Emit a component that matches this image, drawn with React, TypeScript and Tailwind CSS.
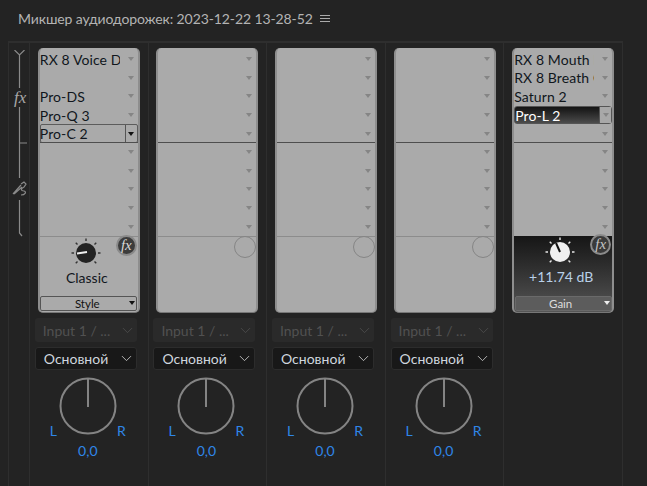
import { ChevronDown } from "lucide-react";

const font = { fontFamily: 'Lato, "Noto Sans", "Liberation Sans", sans-serif' };

const Arrow = ({ className = "border-t-[#858585]" }: { className?: string }) => (
  <span className={`block w-0 h-0 border-x-[3.5px] border-x-transparent border-t-[4px] ${className}`} />
);

const Slot = ({ label, kind }: { label?: string; kind?: "selected" | "active" }) => {
  if (kind === "selected") {
    return (
      <div className="h-[18.6px] flex items-center border border-[#5c5c5c] rounded-[2px] bg-[#aaaaaa]">
        <span className="flex-1 -ml-px text-[14px] tracking-[0.1px] text-[#10161c] whitespace-nowrap overflow-hidden">{label}</span>
        <span className="w-[12px] h-full border-l border-[#555] flex items-center justify-center">
          <Arrow className="border-t-[#111]" />
        </span>
      </div>
    );
  }
  if (kind === "active") {
    return (
      <div className="h-[18.6px] flex items-center border border-[#555] rounded-[3px] bg-gradient-to-b from-[#141414] to-[#4c4c4c]">
        <span className="flex-1 text-[14px] tracking-[0.1px] text-white whitespace-nowrap overflow-hidden">{label}</span>
        <span className="w-[12px] h-full bg-[#a8a8a8] border-l border-[#555] flex items-center justify-center">
          <Arrow />
        </span>
      </div>
    );
  }
  return (
    <div className="h-[18.6px] flex items-center">
      <span className="w-[80px] text-[14px] tracking-[0.1px] text-[#10161c] whitespace-nowrap overflow-hidden">{label}</span>
      <span className="ml-auto mr-[4px]">
        <Arrow />
      </span>
    </div>
  );
};

const Slots = ({ items }: { items: { label?: string; kind?: "selected" | "active" }[] }) => (
  <div className="pt-[2px]">
    {items.slice(0, 5).map((s, i) => (
      <Slot key={i} {...s} />
    ))}
    <div className="h-px bg-[#4e4e4e] -mt-px" />
    {items.slice(5).map((s, i) => (
      <Slot key={i} {...s} />
    ))}
  </div>
);

const FxBadge = ({ light }: { light?: boolean }) => (
  <div
    className={`absolute right-[1px] top-[-2px] w-[21px] h-[21px] rounded-full border-2 border-[#8a8a8a] flex items-center justify-center italic text-[15px] leading-none ${
      light ? "bg-[#3a3a3a] text-[#c4c4c4]" : "bg-[#3c3c3c] text-[#d8d8d8]"
    }`}
    style={{ fontFamily: '"Liberation Serif", serif' }}
  >
    fx
  </div>
);

const Knob = ({ light }: { light?: boolean }) => (
  <svg width="30" height="30" viewBox="0 0 30 30" className="block">
    {[-135, -90, -45, 0, 45, 90, 135].map((a) => (
      <line
        key={a}
        x1="15"
        y1="3"
        x2="15"
        y2="0.5"
        stroke={light ? "#e8e8e8" : "#333"}
        strokeWidth="1.4"
        transform={`rotate(${a} 15 15)`}
      />
    ))}
    <circle cx="15" cy="15" r="10" fill={light ? "#efefef" : "#222"} />
    {light ? (
      <line x1="15" y1="15" x2="11" y2="6" stroke="#111" strokeWidth="2" />
    ) : (
      <line x1="16" y1="14" x2="6" y2="15.5" stroke="#eee" strokeWidth="2" />
    )}
  </svg>
);

const Rack = ({ items, children }: { items: { label?: string; kind?: "selected" | "active" }[]; children?: React.ReactNode }) => (
  <div className="w-[102px] h-[265px] rounded-[5px] bg-[#aaaaaa] border-x-2 border-b border-x-[#8e8e8e] border-b-[#777] flex flex-col overflow-hidden">
    <Slots items={items} />
    {children}
  </div>
);

const Select = ({ label, disabled }: { label: string; disabled?: boolean }) => (
  <div
    className={`w-[102px] rounded-[3px] flex items-center pl-[8px] pr-[1px] text-[14px] ${
      disabled ? "h-[24px] bg-[#2a2a2a] text-[#515151]" : "h-[23px] bg-[#181818] border border-[#2c2c2c] text-[#cfd6de]"
    }`}
  >
    <span className="flex-1 whitespace-nowrap">{label}</span>
    <ChevronDown size={17} strokeWidth={1.2} className={disabled ? "text-[#4e4e4e]" : "text-[#cccccc]"} />
  </div>
);

const Pan = () => (
  <div className="relative w-[102px] h-[82px] text-[#2f86e8] text-[14px]">
    <svg width="58" height="58" viewBox="0 0 58 58" className="mx-auto block">
      <circle cx="29" cy="29" r="27.5" fill="none" stroke="#848484" strokeWidth="2" />
      <line x1="29" y1="2" x2="29" y2="30" stroke="#848484" strokeWidth="2" />
    </svg>
    <div className="flex justify-between px-[13px] -mt-[13px] leading-[18px]">
      <span>L</span>
      <span>R</span>
    </div>
    <div className="text-center leading-[18px] mt-[2px]">0,0</div>
  </div>
);

const blankBottom = (
  <div className="relative flex-1 border-t border-[#8c8c8c]">
    <div className="absolute right-0 top-[-1px] w-[22px] h-[22px] rounded-full border-[1.5px] border-[#858585]" />
  </div>
);

const blankItems = Array.from({ length: 10 }, () => ({}));

const first = [
  { label: "RX 8 Voice D" },
  {},
  { label: "Pro-DS" },
  { label: "Pro-Q 3" },
  { label: "Pro-C 2", kind: "selected" as const },
  {},
  {},
  {},
  {},
  {},
];

const last = [
  { label: "RX 8 Mouth D" },
  { label: "RX 8 Breath C" },
  { label: "Saturn 2" },
  { label: "Pro-L 2", kind: "active" as const },
  {},
  {},
  {},
  {},
  {},
  {},
];

const Channel = ({ children }: { children: React.ReactNode }) => (
  <div className="w-[119px] border-r border-[#2e2e2e] pt-[5px] flex flex-col items-center">{children}</div>
);

const Bottom = () => (
  <div className="flex flex-col items-center mt-[5px] mr-[6px]">
    <Select label="Input 1 / ..." disabled />
    <div className="mt-[5px]">
      <Select label="Основной" />
    </div>
    <div className="mt-[7px] ml-[4px]">
      <Pan />
    </div>
  </div>
);

export default function App() {
  return (
    <div className="w-[647px] h-[486px] bg-[#232323] overflow-hidden" style={font}>
      <div className="h-[41px] flex items-center pl-[18px] pb-[5px] text-[14px] tracking-[-0.1px] text-[#b4b4b4] gap-[7px] whitespace-nowrap">
        <span>Микшер аудиодорожек: 2023-12-22 13-28-52</span>
        <span className="w-[10px] flex flex-col gap-[2px]">
          <span className="h-px bg-[#aaa]" />
          <span className="h-px bg-[#aaa]" />
          <span className="h-px bg-[#aaa]" />
        </span>
      </div>
      <div className="ml-[8px] w-[615px] h-[445px] border-t-2 border-x border-[#2e2e2e] flex">
        <div className="relative w-[21px] border-r border-[#2e2e2e]">
          <svg width="20" height="200" viewBox="0 0 20 200" className="block mt-[7px]" fill="none" stroke="#8a8a8a" strokeWidth="1.2">
            <path d="M5.5 0 L10.5 5 L15.5 0 M10.5 5 V38" />
            <path d="M10.5 57 V93 L18 93 M10.5 93 V128" />
            <path d="M10.5 150 V183 L13 186" />
            <path d="M4 144 L12 135 M5 144 L13 137 M12 134 L15 132 L17 134 L15 137 C11 139 12 141 15 141 C18 142 16 145 12 145" />
          </svg>
          <span
            className="absolute left-[5px] top-[42px] italic text-[17px] text-[#a8a8a8]"
            style={{ fontFamily: '"Liberation Serif", serif' }}
          >
            fx
          </span>
        </div>
        <Channel>
          <Rack items={first}>
            <div className="relative flex-1 border-t border-[#8c8c8c] flex flex-col items-center">
              <FxBadge />
              <div className="mt-[1px] mr-[5px]">
                <Knob />
              </div>
              <div className="mr-[4px] text-[14px] leading-[20px] text-[#10161c]">Classic</div>
              <div className="mt-auto mb-px relative w-[97px] h-[15px] pr-[3px] border border-[#555] rounded-[2px] bg-[#aaaaaa] text-[11.5px] leading-[14px] text-center text-[#111]">
                Style
                <span className="absolute right-[1px] top-[4px]">
                  <Arrow className="border-t-[#111]" />
                </span>
              </div>
            </div>
          </Rack>
          <Bottom />
        </Channel>
        {[0, 1, 2].map((i) => (
          <Channel key={i}>
            <Rack items={blankItems}>{blankBottom}</Rack>
            <Bottom />
          </Channel>
        ))}
        <div className="w-[118px] pt-[5px] flex flex-col items-center">
          <Rack items={last}>
            <div className="relative flex-1 bg-gradient-to-b from-[#161616] to-[#565656] flex flex-col items-center">
              <FxBadge light />
              <div className="mt-[1px] mr-[6px]">
                <Knob light />
              </div>
              <div className="mr-[4px] text-[14px] leading-[20px] text-[#b8d0e8]">+11.74 dB</div>
              <div className="mt-auto mb-px relative w-[97px] h-[15px] pr-[5px] rounded-[2px] border border-[#6a6a6a] bg-[#5c5c5c] text-[11.5px] leading-[14px] text-center text-[#dddddd]">
                Gain
                <span className="absolute right-[1px] top-[4px]">
                  <Arrow className="border-t-[#eeeeee]" />
                </span>
              </div>
            </div>
          </Rack>
        </div>
      </div>
    </div>
  );
}
